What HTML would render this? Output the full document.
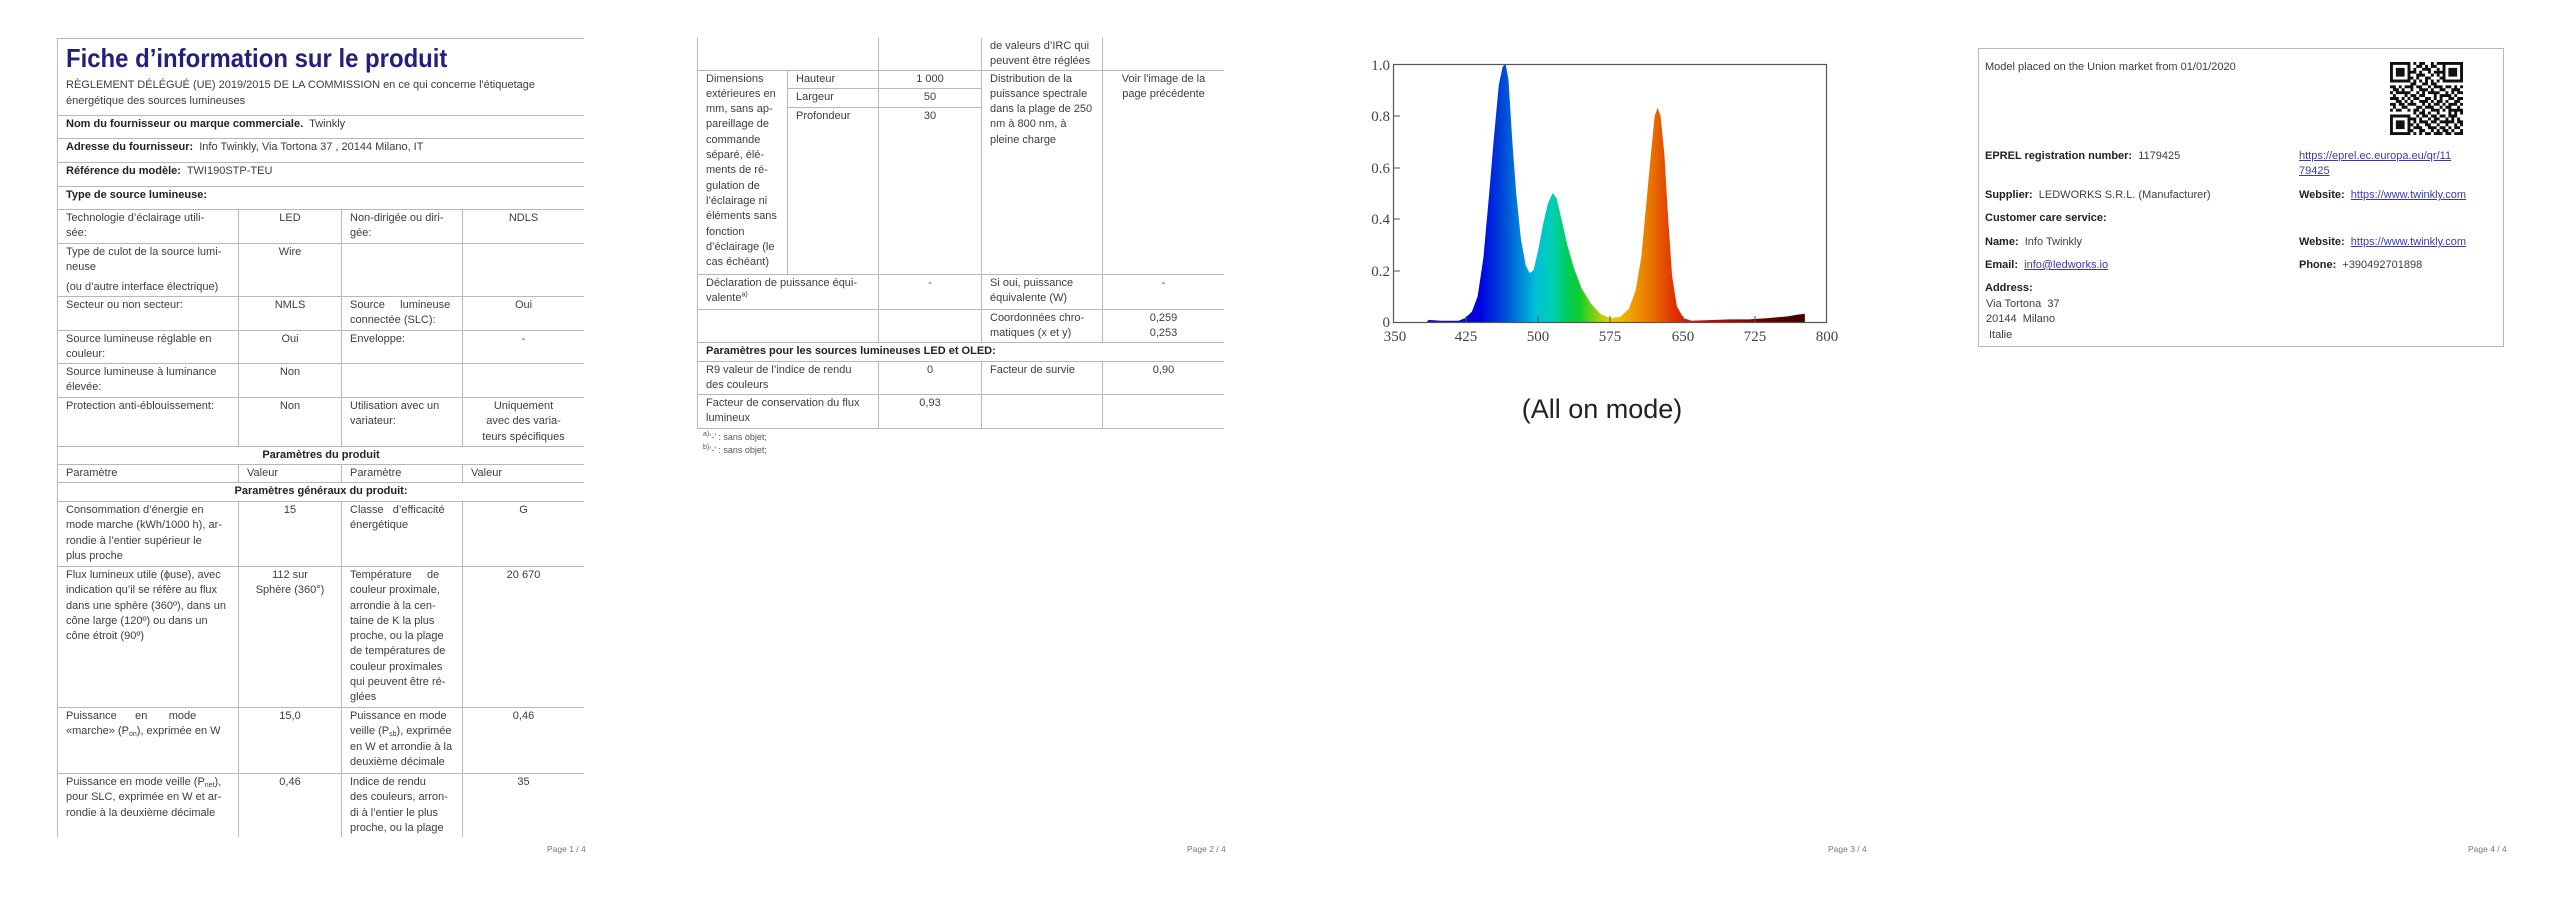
<!DOCTYPE html>
<html><head><meta charset="utf-8">
<style>
*{margin:0;padding:0;box-sizing:border-box}
body{width:2560px;height:905px;background:#fff;position:relative;overflow:hidden;font-family:"Liberation Sans",sans-serif;color:#3a3a3a}
.wrap{position:absolute;overflow:hidden}
table{border-collapse:collapse;table-layout:fixed;width:100%}
td{border:1px solid #b8b8b8;vertical-align:top;padding:1px 8px 0 8px;font-size:11px;line-height:15.3px;color:#3d3d3d;overflow:hidden}
td.c{text-align:center}
b{color:#222}
.pgn{position:absolute;font-size:8.5px;color:#777;top:844px}
.title{font-weight:bold;font-size:26px;color:#231f7c;white-space:nowrap;transform:scaleX(0.92);transform-origin:left top;line-height:30px;margin-top:2px}
sub{font-size:7px;vertical-align:-2px;line-height:0}
sup{font-size:7px;line-height:0}
.p4{position:absolute;left:1978px;top:48px;width:526px;height:299px;border:1px solid #b8b8b8}
.p4 div{position:absolute;font-size:11px;color:#3d3d3d;white-space:nowrap;line-height:15px}
.p4 a{color:#3a3ab0;text-decoration:underline}
</style></head><body>

<!-- PAGE 1 -->
<div class="wrap" style="left:57px;top:38px;width:527px;height:799px">
<table>
<colgroup><col style="width:181px"><col style="width:103px"><col style="width:121px"><col style="width:122px"></colgroup>
<tr style="height:77px"><td colspan="4" style="padding-top:2px"><div class="title">Fiche d’information sur le produit</div><div style="font-size:11px;line-height:16px;margin-top:4px;white-space:nowrap">RÈGLEMENT DÉLÉGUÉ (UE) 2019/2015 DE LA COMMISSION en ce qui concerne l'étiquetage<br>énergétique des sources lumineuses</div></td></tr>
<tr style="height:23px"><td colspan="4"><b>Nom du fournisseur ou marque commerciale.</b>&nbsp; Twinkly</td></tr>
<tr style="height:24px"><td colspan="4"><b>Adresse du fournisseur:</b>&nbsp; Info Twinkly, Via Tortona 37 , 20144 Milano, IT</td></tr>
<tr style="height:24px"><td colspan="4"><b>Référence du modèle:</b>&nbsp; TWI190STP-TEU</td></tr>
<tr style="height:23px"><td colspan="4"><b>Type de source lumineuse:</b></td></tr>
<tr style="height:34px"><td>Technologie d’éclairage utili-<br>sée:</td><td class="c">LED</td><td>Non-dirigée ou diri-<br>gée:</td><td class="c">NDLS</td></tr>
<tr style="height:53px"><td>Type de culot de la source lumi-<br>neuse<div style="margin-top:4px">(ou d’autre interface électrique)</div></td><td class="c">Wire</td><td></td><td></td></tr>
<tr style="height:34px"><td>Secteur ou non secteur:</td><td class="c">NMLS</td><td>Source&nbsp;&nbsp;&nbsp;&nbsp; lumineuse<br>connectée (SLC):</td><td class="c">Oui</td></tr>
<tr style="height:33px"><td>Source lumineuse réglable en<br>couleur:</td><td class="c">Oui</td><td>Enveloppe:</td><td class="c">-</td></tr>
<tr style="height:34px"><td>Source lumineuse à luminance<br>élevée:</td><td class="c">Non</td><td></td><td></td></tr>
<tr style="height:49px"><td>Protection anti-éblouissement:</td><td class="c">Non</td><td>Utilisation avec un<br>variateur:</td><td class="c">Uniquement<br>avec des varia-<br>teurs spécifiques</td></tr>
<tr style="height:18px"><td colspan="4" class="c"><b>Paramètres du produit</b></td></tr>
<tr style="height:18px"><td>Paramètre</td><td>Valeur</td><td>Paramètre</td><td>Valeur</td></tr>
<tr style="height:19px"><td colspan="4" class="c"><b>Paramètres généraux du produit:</b></td></tr>
<tr style="height:65px"><td>Consommation d’énergie en<br>mode marche (kWh/1000 h), ar-<br>rondie à l’entier supérieur le<br>plus proche</td><td class="c">15</td><td>Classe&nbsp;&nbsp; d’efficacité<br>énergétique</td><td class="c">G</td></tr>
<tr style="height:141px"><td>Flux lumineux utile (ϕuse), avec<br>indication qu’il se réfère au flux<br>dans une sphère (360º), dans un<br>cône large (120º) ou dans un<br>cône étroit (90º)</td><td class="c">112 sur<br>Sphère (360°)</td><td>Température&nbsp;&nbsp;&nbsp;&nbsp; de<br>couleur proximale,<br>arrondie à la cen-<br>taine de K la plus<br>proche, ou la plage<br>de températures de<br>couleur proximales<br>qui peuvent être ré-<br>glées</td><td class="c">20 670</td></tr>
<tr style="height:66px"><td>Puissance&nbsp;&nbsp;&nbsp;&nbsp;&nbsp; en&nbsp;&nbsp;&nbsp;&nbsp;&nbsp;&nbsp; mode<br>«marche» (P<sub>on</sub>), exprimée en W</td><td class="c">15,0</td><td>Puissance en mode<br>veille (P<sub>sb</sub>), exprimée<br>en W et arrondie à la<br>deuxième décimale</td><td class="c">0,46</td></tr>
<tr style="height:80px"><td>Puissance en mode veille (P<sub>net</sub>),<br>pour SLC, exprimée en W et ar-<br>rondie à la deuxième décimale</td><td class="c">0,46</td><td>Indice de rendu<br>des couleurs, arron-<br>di à l’entier le plus<br>proche, ou la plage</td><td class="c">35</td></tr>
</table></div>
<div class="pgn" style="left:547px">Page 1 / 4</div>

<!-- PAGE 2 -->
<div class="wrap" style="left:697px;top:38px;width:527px;height:392px">
<table>
<colgroup><col style="width:90px"><col style="width:91px"><col style="width:103px"><col style="width:121px"><col style="width:122px"></colgroup>
<tr style="height:32px"><td colspan="2" style="border-top:none"></td><td style="border-top:none"></td><td style="border-top:none">de valeurs d’IRC qui<br>peuvent être réglées</td><td style="border-top:none"></td></tr>
<tr style="height:18px"><td rowspan="3">Dimensions<br>extérieures en<br>mm, sans ap-<br>pareillage de<br>commande<br>séparé, élé-<br>ments de ré-<br>gulation de<br>l’éclairage ni<br>éléments sans<br>fonction<br>d’éclairage (le<br>cas échéant)</td><td>Hauteur</td><td class="c">1 000</td><td rowspan="3">Distribution de la<br>puissance spectrale<br>dans la plage de 250<br>nm à 800 nm, à<br>pleine charge</td><td rowspan="3" class="c">Voir l'image de la<br>page précédente</td></tr>
<tr style="height:19px"><td>Largeur</td><td class="c">50</td></tr>
<tr style="height:167px"><td>Profondeur</td><td class="c">30</td></tr>
<tr style="height:35px"><td colspan="2">Déclaration de puissance équi-<br>valente<sup>a)</sup></td><td class="c">-</td><td>Si oui, puissance<br>équivalente (W)</td><td class="c">-</td></tr>
<tr style="height:33px"><td colspan="2"></td><td></td><td>Coordonnées chro-<br>matiques (x et y)</td><td class="c">0,259<br>0,253</td></tr>
<tr style="height:19px"><td colspan="5"><b>Paramètres pour les sources lumineuses LED et OLED:</b></td></tr>
<tr style="height:33px"><td colspan="2">R9 valeur de l’indice de rendu<br>des couleurs</td><td class="c">0</td><td>Facteur de survie</td><td class="c">0,90</td></tr>
<tr style="height:34px"><td colspan="2">Facteur de conservation du flux<br>lumineux</td><td class="c">0,93</td><td></td><td></td></tr>
</table></div>
<div style="position:absolute;left:703px;top:431px;font-size:9px;color:#555;line-height:12px"><sup>a)</sup>‘-’ : sans objet;</div>
<div style="position:absolute;left:703px;top:444px;font-size:9px;color:#555;line-height:12px"><sup>b)</sup>‘-’ : sans objet;</div>
<div class="pgn" style="left:1187px">Page 2 / 4</div>

<!-- PAGE 3 chart -->
<svg style="position:absolute;left:1393px;top:64px" width="433" height="258" viewBox="350 0 450 1" preserveAspectRatio="none">
<defs><linearGradient id="sp" gradientUnits="userSpaceOnUse" x1="350" y1="0" x2="800" y2="0">
<stop offset="0" stop-color="#3000a0"/><stop offset="0.13" stop-color="#1010c0"/><stop offset="0.2" stop-color="#0000e0"/><stop offset="0.26" stop-color="#0050d8"/><stop offset="0.3" stop-color="#0090d8"/><stop offset="0.33" stop-color="#00c0d8"/><stop offset="0.37" stop-color="#00d0b0"/><stop offset="0.4" stop-color="#00cc60"/><stop offset="0.43" stop-color="#10cc30"/><stop offset="0.47" stop-color="#90d010"/><stop offset="0.5" stop-color="#e0d000"/><stop offset="0.55" stop-color="#f0a000"/><stop offset="0.6" stop-color="#e87000"/><stop offset="0.65" stop-color="#e03000"/><stop offset="0.7" stop-color="#e00010"/><stop offset="0.78" stop-color="#b00000"/><stop offset="0.86" stop-color="#600000"/><stop offset="1" stop-color="#300000"/></linearGradient></defs>
<path fill="url(#sp)" d="M350,1 L385,1 L387,0.992 L400,0.995 L418,0.995 L425,0.985 L432,0.96 L438,0.9 L444,0.75 L450,0.5 L455,0.28 L460,0.08 L464,0.01 L467,0 L470,0.06 L474,0.3 L478,0.5 L483,0.68 L488,0.78 L492,0.81 L496,0.8 L501,0.72 L506,0.62 L511,0.54 L516,0.5 L520,0.52 L525,0.6 L531,0.7 L538,0.79 L546,0.87 L556,0.93 L566,0.97 L576,0.985 L586,0.98 L595,0.95 L602,0.88 L608,0.75 L613,0.55 L618,0.35 L622,0.2 L625,0.17 L628,0.2 L632,0.35 L636,0.6 L640,0.82 L645,0.94 L652,0.985 L660,0.995 L700,0.99 L720,0.99 L740,0.985 L760,0.978 L770,0.972 L778,0.968 L778,1 Z"/>
</svg>
<svg style="position:absolute;left:1340px;top:50px" width="520" height="310">
<rect x="53.5" y="14.5" width="433" height="258" fill="none" stroke="#555" stroke-width="1.2"/>
<g stroke="#555" stroke-width="1">
<line x1="54" y1="66" x2="60" y2="66"/><line x1="54" y1="118" x2="60" y2="118"/><line x1="54" y1="169" x2="60" y2="169"/><line x1="54" y1="221" x2="60" y2="221"/>
<line x1="126" y1="272" x2="126" y2="266"/><line x1="198" y1="272" x2="198" y2="266"/><line x1="270" y1="272" x2="270" y2="266"/><line x1="343" y1="272" x2="343" y2="266"/><line x1="415" y1="272" x2="415" y2="266"/>
</g>
<g font-family="Liberation Serif,serif" font-size="15" fill="#444" text-anchor="end">
<text x="50" y="20">1.0</text><text x="50" y="71">0.8</text><text x="50" y="123">0.6</text><text x="50" y="174">0.4</text><text x="50" y="226">0.2</text><text x="50" y="277">0</text></g>
<g font-family="Liberation Serif,serif" font-size="15" fill="#444" text-anchor="middle">
<text x="55" y="291">350</text><text x="126" y="291">425</text><text x="198" y="291">500</text><text x="270" y="291">575</text><text x="343" y="291">650</text><text x="415" y="291">725</text><text x="487" y="291">800</text></g>
</svg>
<div style="position:absolute;left:1480px;top:392px;width:244px;text-align:center;font-size:27px;color:#222;line-height:34px">(All on mode)</div>
<div class="pgn" style="left:1828px">Page 3 / 4</div>

<!-- PAGE 4 -->
<div class="p4">
<div style="left:6px;top:11px">Model placed on the Union market from 01/01/2020</div>
<svg id="qr" style="position:absolute;left:411px;top:13px" width="73" height="73" viewBox="0 0 25 25"></svg>
<div style="left:6px;top:100px"><b>EPREL registration number:</b>&nbsp; 1179425</div>
<div style="left:320px;top:100px"><a>https://eprel.ec.europa.eu/qr/11</a><br><a>79425</a></div>
<div style="left:6px;top:139px"><b>Supplier:</b>&nbsp; LEDWORKS S.R.L. (Manufacturer)</div>
<div style="left:320px;top:139px"><b>Website:</b>&nbsp; <a>https://www.twinkly.com</a></div>
<div style="left:6px;top:162px"><b>Customer care service:</b></div>
<div style="left:6px;top:186px"><b>Name:</b>&nbsp; Info Twinkly</div>
<div style="left:320px;top:186px"><b>Website:</b>&nbsp; <a>https://www.twinkly.com</a></div>
<div style="left:6px;top:209px"><b>Email:</b>&nbsp; <a>info@ledworks.io</a></div>
<div style="left:320px;top:209px"><b>Phone:</b>&nbsp; +390492701898</div>
<div style="left:6px;top:232px"><b>Address:</b></div>
<div style="left:7px;top:248px">Via Tortona&nbsp; 37</div>
<div style="left:7px;top:263px">20144&nbsp; Milano</div>
<div style="left:10px;top:279px">Italie</div>
</div>
<div class="pgn" style="left:2468px">Page 4 / 4</div>

<script>
var rows=["1111111010110010111111111","1000001001101011001000001","1011101010011100101011101","1011101110100101111011101","1011101001110010101011101","1000001101001100011000001","1111111010101010101111111","0000000110011011000000000","1101011101100101110110101","0110100100111010011001110","1011111001010111100101011","0100010110110001011110100","1110101011001101010011011","0011010100111010110100110","1101101110010101101011101","0100110001101110010110010","1011001011010011101011111","0000000010110100100010101","1111111001011011011011100","1000001110100101100101010","1011101010111011011111011","1011101101001100100100101","1011101011100111011010110","1000001100110010101101001","1111111010101101110110111"];
var s="";for(var y=0;y<25;y++)for(var x=0;x<25;x++)if(rows[y][x]=="1")s+="M"+x+","+y+"h1v1h-1z";
document.getElementById("qr").innerHTML='<path fill="#111" d="'+s+'"/>';
</script>
</body></html>
